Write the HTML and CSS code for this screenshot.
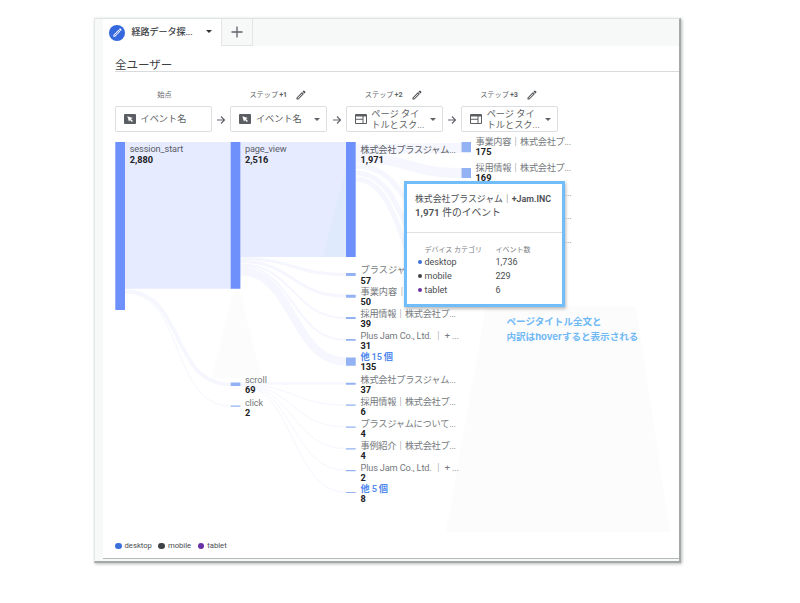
FILE: index.html
```html
<!DOCTYPE html>
<html lang="ja">
<head>
<meta charset="utf-8">
<title>経路データ探索</title>
<link rel="stylesheet" href="styles.css">
</head>
<body>
<svg class="defs" width="0" height="0">
  <symbol id="pencil" viewBox="0 0 24 24"><path d="M3 17.25V21h3.75L17.8 9.94l-3.75-3.75L3 17.25zm3.2 1.75H5v-1.2l9.05-9.05 1.2 1.2L6.2 19zM20.7 7.04a1 1 0 0 0 0-1.41l-2.34-2.34a1 1 0 0 0-1.41 0l-1.83 1.83 3.75 3.75 1.83-1.83z" fill="currentColor"/></symbol>
  <symbol id="event" viewBox="0 0 12 10"><rect width="12" height="10" rx="1" fill="#5a5e62"/><path d="M3.3 2.2 8.8 4 6.9 5 8.9 7 7.9 8 5.9 6 5 7.800z" fill="#fff"/></symbol>
  <symbol id="page" viewBox="0 0 12 10"><path fill-rule="evenodd" d="M1 0h10a1 1 0 0 1 1 1v8a1 1 0 0 1-1 1H1a1 1 0 0 1-1-1V1a1 1 0 0 1 1-1zM1 2.600v2.200h6.500V2.600zM1 5.800V9h6.500V5.800zM8.500 2.600V9H11V2.600z" fill="#5a5e62"/></symbol>
  <symbol id="arrow" viewBox="0 0 10 10"><path d="M1 5h7.500M5 1.500 8.500 5 5 8.500" fill="none" stroke="#5f6368" stroke-width="1.100"/></symbol>
</svg>
<main class="window">
  <header class="tabs">
    <div class="tab">
      <span class="badge"><svg width="11" height="11"><use href="#pencil"/></svg></span>
      <span class="tab-name">経路データ探...</span>
      <i class="caret dark"></i>
    </div>
    <div class="add"><svg width="12" height="12" viewBox="0 0 12 12"><path d="M6 .5v11M.5 6h11" stroke="#5f6368" stroke-width="1.300"/></svg></div>
  </header>
  <section class="panel">
    <h1 class="segment">全ユーザー</h1>
    <div class="steps">
      <div class="step">
        <div class="step-label">始点</div>
        <div class="select"><svg class="icon" width="12" height="10"><use href="#event"/></svg><span class="select-text">イベント名</span></div>
      </div>
      <svg class="arrow" width="10" height="10"><use href="#arrow"/></svg>
      <div class="step">
        <div class="step-label edit">ステップ<b>+1</b><svg width="12" height="12"><use href="#pencil"/></svg></div>
        <div class="select"><svg class="icon" width="12" height="10"><use href="#event"/></svg><span class="select-text">イベント名</span><i class="caret"></i></div>
      </div>
      <svg class="arrow" width="10" height="10"><use href="#arrow"/></svg>
      <div class="step">
        <div class="step-label edit">ステップ<b>+2</b><svg width="12" height="12"><use href="#pencil"/></svg></div>
        <div class="select"><svg class="icon" width="12" height="10"><use href="#page"/></svg><span class="select-text">ページ タイ<br>トルとスク...</span><i class="caret"></i></div>
      </div>
      <svg class="arrow" width="10" height="10"><use href="#arrow"/></svg>
      <div class="step">
        <div class="step-label edit">ステップ<b>+3</b><svg width="12" height="12"><use href="#pencil"/></svg></div>
        <div class="select"><svg class="icon" width="12" height="10"><use href="#page"/></svg><span class="select-text">ページ タイ<br>トルとスク...</span><i class="caret"></i></div>
      </div>
    </div>
    <div class="chart">
      <svg class="sankey" width="576" height="398" viewBox="103 134 576 398">
        <path class="shade" d="M486 306 H636 L670 532 H446z"/>
        <path class="shade" d="M234 289H239L262 378H212z"/>
        <g class="flow">
          <path d="M125 142H231V288.700H125zM240.500 142H346V257H240.500z"/>
        </g>
        <path class="tint" d="M346 168V257H323z"/>
        <g class="thin">
          <path stroke-width="3.500" d="M125 291C185 291 170 384.500 231 384.500"/>
          <path stroke-width="1" d="M125 293C185 293 170 406 231 406"/>
          <path stroke-width="3" d="M240.500 258.500C294 258.500 292 274.500 346 274.500"/>
          <path stroke-width="3" d="M240.500 261.500C294 261.500 292 296 346 296"/>
          <path stroke-width="2" d="M240.500 264.500C294 264.500 292 318 346 318"/>
          <path stroke-width="2" d="M240.500 266.500C294 266.500 292 340 346 340"/>
          <path stroke-width="8" d="M240.500 271.500C294 271.500 292 361.500 346 361.500"/>
          <path stroke-width="2" d="M240.500 383.600H346"/>
          <path d="M240.500 384.500C294 384.500 292 405 346 405M240.500 385C294 385 292 427 346 427M240.500 385.300C294 385.300 292 448.700 346 448.700M240.500 385.600C294 385.600 292 470.500 346 470.500M240.500 386C294 386 292 492.300 346 492.300"/>
          <path stroke-width="10" d="M356 149C410 149 408 148 461 148M356 158C410 158 408 173 461 173"/>
          <path stroke-width="5" d="M356 166C395 166 402 200 435 240M356 173C390 173 402 216 425 270M356 179C388 179 400 230 420 290"/>
        </g>
        <g class="node">
          <path d="M115.300 142H125V310H115.300zM230.700 142H240.400V288.700H230.700zM346 142H355.700V257H346z"/>
        </g>
        <g class="node light">
          <path d="M461.500 142h9.500v10.200h-9.500zM461.500 168h9.500v10h-9.500zM346 273h9.700v3H346zM346 294.700h9.700v3H346zM346 317h9.700v2H346zM346 339h9.700v1.800H346zM346 357.500h9.700v8.200H346zM346 382.700h9.700v2H346zM346 404.500h9.700v1.200H346zM346 426.500h9.700v1.200H346zM346 448.300h9.700v1.200H346zM346 470h9.700v1.200H346zM346 491.900h9.700v1.200H346zM230.700 382.600h9.700v3.400h-9.700zM230.700 405.600h9.700v1.200h-9.700z"/>
        </g>
        <g class="name">
          <text class="strong" x="129.700" y="152.300" textLength="53.500">session_start</text>
          <text class="strong" x="244.900" y="152.300" textLength="41.700">page_view</text>
          <text x="244.900" y="382.600" textLength="22">scroll</text>
          <text x="244.900" y="405.700" textLength="18.300">click</text>
          <text class="strong" x="360.500" y="152.500" textLength="95.500">株式会社プラスジャム...</text>
          <text x="360.500" y="273.300">プラスジャ</text>
          <text x="360.500" y="295.200">事業内容｜</text>
          <text x="360.500" y="317.300" textLength="95.500">採用情報｜株式会社プ...</text>
          <text x="360.500" y="339.300" textLength="98.500">Plus Jam Co., Ltd. ｜ + ...</text>
          <text x="360.500" y="382.800" textLength="95.500">株式会社プラスジャム...</text>
          <text x="360.500" y="404.900" textLength="95.500">採用情報｜株式会社プ...</text>
          <text x="360.500" y="426.600" textLength="95.500">プラスジャムについて...</text>
          <text x="360.500" y="448.600" textLength="95.500">事例紹介｜株式会社プ...</text>
          <text x="360.500" y="470.500" textLength="98.500">Plus Jam Co., Ltd. ｜ + ...</text>
          <text x="475.600" y="144.800" textLength="95.500">事業内容｜株式会社プ...</text>
          <text x="475.600" y="170.700" textLength="95.500">採用情報｜株式会社プ...</text>
          <text x="564.500" y="195.800">...</text>
          <text x="564.500" y="218.800">...</text>
          <text x="564.500" y="242.500">...</text>
          <text class="more" x="360.500" y="359.700" textLength="32.500">他 15 個</text>
          <text class="more" x="360.500" y="492" textLength="27.500">他 5 個</text>
        </g>
        <g class="count">
          <text x="129.700" y="162.600">2,880</text>
          <text x="244.900" y="162.600">2,516</text>
          <text x="244.900" y="393">69</text>
          <text x="244.900" y="416">2</text>
          <text x="360.500" y="162.700">1,971</text>
          <text x="360.500" y="283.600">57</text>
          <text x="360.500" y="305.400">50</text>
          <text x="360.500" y="327.400">39</text>
          <text x="360.500" y="349.400">31</text>
          <text x="360.500" y="370">135</text>
          <text x="360.500" y="393">37</text>
          <text x="360.500" y="415">6</text>
          <text x="360.500" y="436.900">4</text>
          <text x="360.500" y="458.700">4</text>
          <text x="360.500" y="480.600">2</text>
          <text x="360.500" y="502.400">8</text>
          <text x="475.600" y="155">175</text>
          <text x="475.600" y="181.200">169</text>
        </g>
      </svg>
      <aside class="tooltip">
        <div class="tip-head">
          <div class="tip-title">株式会社プラスジャム｜<b>+Jam.INC</b></div>
          <div class="tip-total"><b>1,971</b> 件のイベント</div>
        </div>
        <div class="tip-grid">
          <span class="tip-th">デバイス カテゴリ</span><span class="tip-th">イベント数</span>
          <span class="device d1">desktop</span><span>1,736</span>
          <span class="device d2">mobile</span><span>229</span>
          <span class="device d3">tablet</span><span>6</span>
        </div>
      </aside>
      <p class="note">ページタイトル全文と<br>内訳はhoverすると表示される</p>
    </div>
    <footer class="legend"><span class="k1">desktop</span><span class="k2">mobile</span><span class="k3">tablet</span></footer>
  </section>
</main>
</body>
</html>
```
FILE: styles.css
```css
* { box-sizing: border-box; }
body { margin: 0; height: 603px; padding: 18px 0 0 94px; background: #fff; overflow: hidden; font-family: Roboto, "Noto Sans CJK JP", sans-serif; color: #4b4e52; }
b { font-weight: 600; }
.defs { position: absolute; }
.window { width: 586.5px; height: 545px; padding-left: 8px; background: #f7f8f8; border-top: 1px solid #dfe3e2; border-left: 1px solid #e6e9e8; border-right: 2px solid #a4a9a8; border-bottom: 2px solid #a4a9a8; box-shadow: 1px 1px 3px #b4bbb9; }
.tabs { display: flex; height: 27px; }
.tab { width: 118px; display: flex; align-items: center; padding-left: 6px; background: #fff; }
.badge { width: 16px; height: 16px; border-radius: 50%; background: #3568dc; color: #fff; display: flex; align-items: center; justify-content: center; }
.tab-name { width: 61px; margin: -3px 0 0 6.500px; font-size: 9px; color: #303337; -webkit-text-stroke: .15px; white-space: nowrap; }
.caret { width: 0; height: 0; border: 3px solid transparent; border-top: 3.500px solid #5f6368; border-bottom: 0; }
.caret.dark { margin: -2px 0 0 13px; border-top-color: #303236; }
.add { width: 32px; display: flex; align-items: center; justify-content: center; border: solid #e3e5e6; border-width: 0 1px 1px; }
.panel { height: 513px; background: #fff; border-bottom: 1px solid #b5b9b8; display: flex; flex-direction: column; }
.segment { margin: 0 0 0 12px; height: 26px; padding-top: 11px; border-bottom: 1px solid #d8dadc; font-size: 11.500px; line-height: 16px; font-weight: 400; color: #3c4043; }
.steps { display: flex; align-items: flex-end; height: 60px; padding-left: 12px; }
.step { width: 97px; }
.step-label { height: 17px; text-align: center; font-size: 7.200px; line-height: 12px; color: #606468; }
.step:first-child .step-label { padding-left: 2px; }
.step-label.edit { display: flex; padding-left: 19px; }
.step-label b { margin-left: 1px; font-weight: 700; }
.step-label svg { margin-left: 8px; color: #484b4f; }
.select { height: 26px; padding: 0 6px 0 8px; display: flex; align-items: center; border: 1px solid #dcdee1; border-radius: 2px; }
.icon, .arrow { flex: none; }
.arrow { margin: 0 4.200px 7px; }
.select-text { flex: 1; margin: -1px 0 0 4.500px; font-size: 9.200px; line-height: 11px; white-space: nowrap; color: #5b5e62; }
.chart { position: relative; height: 398px; margin-top: 2px; }
.sankey { display: block; }
.shade { fill: #fcfcfd; }
.flow { fill: #e7ebff; }
.tint { fill: #e0eafd; }
.thin { fill: none; stroke: #f5f6fe; }
.node { fill: #6e90fa; }
.light { fill: #92b2f3; }
.name { font-size: 9.200px; fill: #75797d; }
.strong { fill: #5a5e65; }
.more { fill: #5089ee; font-weight: 600; }
.count { font-size: 9.200px; font-weight: 700; fill: #202124; }
.tooltip { position: absolute; left: 300.500px; top: 47px; width: 161.500px; height: 125.500px; border: 3.500px solid #70bdfa; background: #fff; box-shadow: 1px 2px 3px #bbb; }
.tip-head { height: 48.500px; padding: 8px 0 0 8.500px; border-bottom: 1px solid #dfe1e3; white-space: nowrap; }
.tip-title { font-size: 8.850px; line-height: 14px; }
.tip-total { font-size: 9.800px; line-height: 14px; }
.tip-grid { display: grid; grid-template-columns: 71px 1fr; grid-template-rows: 12px repeat(3, 14px); padding: 10px 0 0 18px; align-items: center; font-size: 9px; }
.tip-th { font-size: 7px; color: #797d81; white-space: nowrap; }
.device { display: flex; align-items: center; margin-left: -7px; }
.device::before { content: ""; width: 4px; height: 4px; margin-right: 3px; border-radius: 50%; }
.d1::before, .k1::before { background: #3b6fd9; }
.d2::before, .k2::before { background: #3f4246; }
.d3::before, .k3::before { background: #6832a4; }
.note { position: absolute; left: 403.500px; top: 180px; margin: 0; font-size: 9.550px; line-height: 15px; font-weight: 700; color: #70b9f5; white-space: nowrap; font-family: Inter, "Noto Sans CJK JP", sans-serif; }
.legend { display: flex; gap: 6.500px; margin: 8px 0 0 12px; font-size: 7.700px; line-height: 12px; color: #4b4e52; }
.legend span { display: flex; align-items: center; }
.legend span::before { content: ""; width: 6.500px; height: 6.500px; margin-right: 3px; border-radius: 50%; }
```
